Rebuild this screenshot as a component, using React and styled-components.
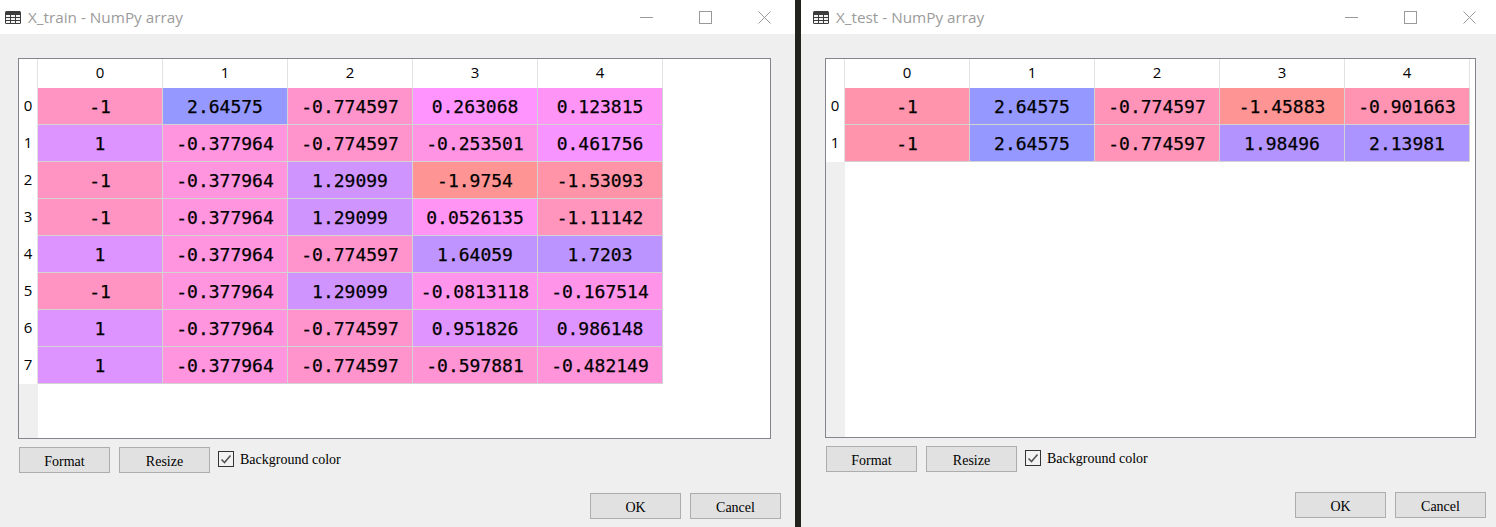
import React from 'react';
import styled, { createGlobalStyle } from 'styled-components';

const Global = createGlobalStyle`
  html, body {
    margin: 0;
    padding: 0;
    overflow: hidden;
    background: #23231e;
  }
`;

const Page = styled.div`
  display: flex;
  width: 1496px;
  height: 527px;
  background: #23231e;
`;

const Divider = styled.div`
  width: 6px;
  flex: none;
`;

const Window = styled.div`
  width: ${(p) => p.$width}px;
  flex: none;
  display: flex;
  flex-direction: column;
  background: #efefef;
`;

const TitleBar = styled.div`
  height: 34px;
  flex: none;
  display: flex;
  align-items: center;
  background: #fff;
  padding: 0 ${(p) => p.$right}px 0 5px;
`;

const TitleIcon = styled.svg`
  width: 16px;
  height: 13px;
  flex: none;
  margin: 1px 7px 0 ${(p) => p.$left}px;
`;

const Title = styled.div`
  flex: 1;
  font: 15.3px "Open Sans", sans-serif;
  color: #9b9b9b;
  padding-bottom: 1px;
`;

const Controls = styled.div`
  display: flex;
  align-items: center;
  gap: 46px;
`;

const ControlIcon = styled.svg`
  width: 13px;
  height: 13px;
  display: block;
`;

const Body = styled.div`
  flex: 1;
  display: flex;
  flex-direction: column;
  padding: 24px ${(p) => p.$right}px 0 ${(p) => p.$left}px;
`;

const Frame = styled.div`
  height: ${(p) => p.$height}px;
  box-sizing: border-box;
  flex: none;
  display: flex;
  border: 1px solid #84848f;
  background: #fff;
`;

const Gutter = styled.div`
  width: 19px;
  flex: none;
  box-sizing: border-box;
  background: #efefef;
  display: flex;
  flex-direction: column;
`;

const Corner = styled.div`
  height: 29px;
  background: #fff;
  border-right: 1px solid #e2e2e2;
`;

const RowLabel = styled.div`
  height: 37px;
  box-sizing: border-box;
  padding-bottom: 3px;
  background: #fff;
  border-right: 1px solid #e2e2e2;
  display: flex;
  align-items: center;
  justify-content: center;
  font: 15px "Open Sans", sans-serif;
  color: #000;
`;

const Sheet = styled.div`
  display: flex;
  flex-direction: column;
  flex: 1;
`;

const HeaderRow = styled.div`
  display: flex;
  height: 29px;
`;

const HeaderCell = styled.div`
  width: 125px;
  box-sizing: border-box;
  padding-bottom: 3px;
  border-right: 1px solid #e2e2e2;
  display: flex;
  align-items: center;
  justify-content: center;
  font: 15px "Open Sans", sans-serif;
  color: #000;
`;

const DataRow = styled.div`
  display: flex;
  height: 37px;
`;

const Cell = styled.div`
  width: 125px;
  box-sizing: border-box;
  border-right: 1px solid #d3d3d3;
  border-bottom: 1px solid #d3d3d3;
  background: ${(p) => p.$bg};
  display: flex;
  align-items: center;
  justify-content: center;
  font: 18px "DejaVu Sans Mono", monospace;
  -webkit-text-stroke: 0.25px #000;
  color: #000;
`;

const ToolRow = styled.div`
  display: flex;
  align-items: flex-start;
  margin: 8px 0 0 1px;
`;

const Button = styled.button`
  width: 91px;
  height: 26px;
  box-sizing: border-box;
  flex: none;
  padding: 3px 0 0;
  border: 1px solid #adadad;
  border-radius: 0;
  background: #e1e1e1;
  font: 14px "Liberation Serif", serif;
  color: #000;
`;

const ResizeButton = styled(Button)`
  margin-left: 9px;
`;

const CheckLabel = styled.div`
  display: flex;
  align-items: flex-start;
  margin: 4px 0 0 8px;
  font: 14px/16px "Liberation Serif", serif;
  color: #000;
`;

const CheckText = styled.span`
  margin-top: 1px;
`;

const CheckBox = styled.div`
  width: 16px;
  height: 16px;
  box-sizing: border-box;
  margin-right: 6px;
  border: 1px solid #333;
  background: #f2f2f2;
  display: flex;
  align-items: center;
  justify-content: center;
`;

const Footer = styled.div`
  display: flex;
  justify-content: flex-end;
  gap: 9px;
  margin: 20px ${(p) => p.$right}px 0 0;
`;

// spyder colours: hue from value, then 60% alpha on white
const cellColor = (value, min, max) => {
  const hue = 0.66 + (0.34 * (max - value)) / (max - min);
  const h = (hue % 1) * 6;
  const i = Math.floor(h);
  const f = h - i;
  const s = 0.7;
  const p = 1 - s;
  const q = 1 - s * f;
  const t = 1 - s * (1 - f);
  const rgb = [[1, t, p], [q, 1, p], [p, 1, t], [p, q, 1], [t, p, 1], [1, p, q]][i];
  const [r, g, b] = rgb.map((c) => Math.round((0.6 * c + 0.4) * 255));
  return `rgb(${r}, ${g}, ${b})`;
};

const trainRows = [
  ['-1', '2.64575', '-0.774597', '0.263068', '0.123815'],
  ['1', '-0.377964', '-0.774597', '-0.253501', '0.461756'],
  ['-1', '-0.377964', '1.29099', '-1.9754', '-1.53093'],
  ['-1', '-0.377964', '1.29099', '0.0526135', '-1.11142'],
  ['1', '-0.377964', '-0.774597', '1.64059', '1.7203'],
  ['-1', '-0.377964', '1.29099', '-0.0813118', '-0.167514'],
  ['1', '-0.377964', '-0.774597', '0.951826', '0.986148'],
  ['1', '-0.377964', '-0.774597', '-0.597881', '-0.482149'],
];

const testRows = [
  ['-1', '2.64575', '-0.774597', '-1.45883', '-0.901663'],
  ['-1', '2.64575', '-0.774597', '1.98496', '2.13981'],
];

const TableGlyph = ({ left }) => (
  <TitleIcon $left={left} viewBox="0 0 16 13">
    <rect x="0" y="0" width="16" height="13" rx="1.5" fill="#3c3c3c" />
    <g fill="#f4f4f4">
      {[1, 6, 11].map((x) =>
        [4, 7, 10].map((y) => <rect key={`${x}-${y}`} x={x} y={y} width="4" height="2" />)
      )}
    </g>
  </TitleIcon>
);

const WindowControls = () => (
  <Controls>
    <ControlIcon viewBox="0 0 13 13">
      <line x1="0" y1="6.5" x2="13" y2="6.5" stroke="#9a9a9a" />
    </ControlIcon>
    <ControlIcon viewBox="0 0 13 13">
      <rect x="0.5" y="0.5" width="12" height="12" fill="none" stroke="#9a9a9a" />
    </ControlIcon>
    <ControlIcon viewBox="0 0 13 13">
      <path d="M0.5 0.5L12.5 12.5M12.5 0.5L0.5 12.5" fill="none" stroke="#9a9a9a" />
    </ControlIcon>
  </Controls>
);

const ArrayWindow = ({ name, rows, width, left, right, iconLeft, frameHeight, footerRight }) => {
  const values = rows.flat().map(parseFloat);
  const min = Math.min(...values);
  const max = Math.max(...values);
  return (
    <Window $width={width}>
      <TitleBar $right={right}>
        <TableGlyph left={iconLeft} />
        <Title>{name} - NumPy array</Title>
        <WindowControls />
      </TitleBar>
      <Body $left={left} $right={right}>
        <Frame $height={frameHeight}>
          <Gutter>
            <Corner />
            {rows.map((row, i) => (
              <RowLabel key={i}>{i}</RowLabel>
            ))}
          </Gutter>
          <Sheet>
            <HeaderRow>
              {rows[0].map((_, i) => (
                <HeaderCell key={i}>{i}</HeaderCell>
              ))}
            </HeaderRow>
            {rows.map((row, i) => (
              <DataRow key={i}>
                {row.map((text, j) => (
                  <Cell key={j} $bg={cellColor(parseFloat(text), min, max)}>
                    {text}
                  </Cell>
                ))}
              </DataRow>
            ))}
          </Sheet>
        </Frame>
        <ToolRow>
          <Button>Format</Button>
          <ResizeButton>Resize</ResizeButton>
          <CheckLabel>
            <CheckBox>
              <svg width="12" height="12" viewBox="0 0 12 12">
                <path d="M1.5 6.5L4.5 9.5L10.5 2.5" fill="none" stroke="#555" strokeWidth="1.6" />
              </svg>
            </CheckBox>
            <CheckText>Background color</CheckText>
          </CheckLabel>
        </ToolRow>
        <Footer $right={footerRight}>
          <Button>OK</Button>
          <Button>Cancel</Button>
        </Footer>
      </Body>
    </Window>
  );
};

export default function App() {
  return (
    <Page>
      <Global />
      <ArrayWindow
        name="X_train"
        rows={trainRows}
        width={795}
        left={18}
        right={24}
        iconLeft={0}
        frameHeight={381}
        footerRight={-10}
      />
      <Divider />
      <ArrayWindow
        name="X_test"
        rows={testRows}
        width={695}
        left={24}
        right={20}
        iconLeft={7}
        frameHeight={380}
        footerRight={-10}
      />
    </Page>
  );
}
